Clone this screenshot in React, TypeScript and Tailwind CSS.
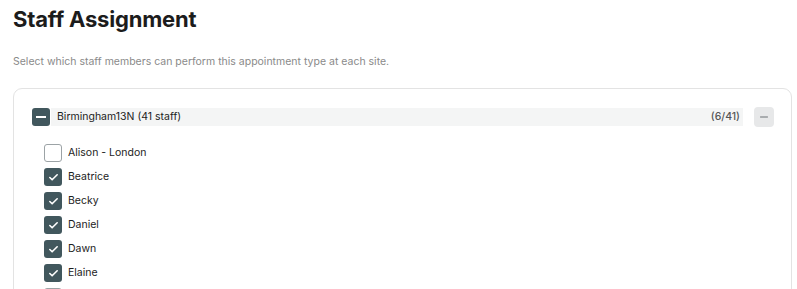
import { Check, Minus } from "lucide-react";

const staff = [
  { name: "Alison - London", checked: false },
  { name: "Beatrice", checked: true },
  { name: "Becky", checked: true },
  { name: "Daniel", checked: true },
  { name: "Dawn", checked: true },
  { name: "Elaine", checked: true },
  { name: "Emma", checked: false },
];

function Box({ checked }: { checked: boolean }) {
  if (checked) {
    return (
      <span className="w-[18px] h-[18px] rounded-[3px] bg-[#41575d] flex items-center justify-center shrink-0">
        <Check size={11} strokeWidth={3.5} className="text-white" />
      </span>
    );
  }
  return (
    <span className="w-[18px] h-[18px] rounded-[3px] border border-[#9ca3a6] bg-white shrink-0" />
  );
}

export default function App() {
  return (
    <div className="h-screen overflow-hidden bg-white font-['Inter','Liberation_Sans',sans-serif] text-[#1c1c1c] pl-[13px] pr-[5px] pt-[4px]">
      <h1 className="text-[22px] leading-[30px] font-bold tracking-[-0.2px]">
        Staff Assignment
      </h1>
      <p className="mt-[20px] text-[10.5px] leading-[16px] text-[#8a8a8a]">
        Select which staff members can perform this appointment type at each site.
      </p>

      <div className="mt-[18px] border border-[#e3e3e3] rounded-[9px] pl-[18px] pr-[17px] pt-[18px] pb-[20px]">
        <div className="flex items-center">
          <span className="w-[18px] h-[18px] rounded-[3px] bg-[#41575d] flex items-center justify-center shrink-0">
            <span className="w-[10px] h-[2px] bg-white" />
          </span>
          <div className="ml-[1px] flex-1 flex items-center justify-between bg-[#f4f5f5] h-[18px] pl-[6px] pr-[3px] text-[10.5px]">
            <span>Birmingham13N (41 staff)</span>
            <span className="text-[#555] font-medium">(6/41)</span>
          </div>
          <button className="ml-[11px] w-[20px] h-[20px] rounded-[4px] bg-[#e7e8e9] flex items-center justify-center shrink-0">
            <Minus size={12} strokeWidth={2} className="text-[#6b7074]" />
          </button>
        </div>

        <ul className="mt-[17px] pl-[12px] flex flex-col gap-[6px]">
          {staff.map((s) => (
            <li key={s.name} className="flex items-center gap-[6px] h-[18px] text-[10.5px]">
              <Box checked={s.checked} />
              <span>{s.name}</span>
            </li>
          ))}
        </ul>
      </div>
    </div>
  );
}
